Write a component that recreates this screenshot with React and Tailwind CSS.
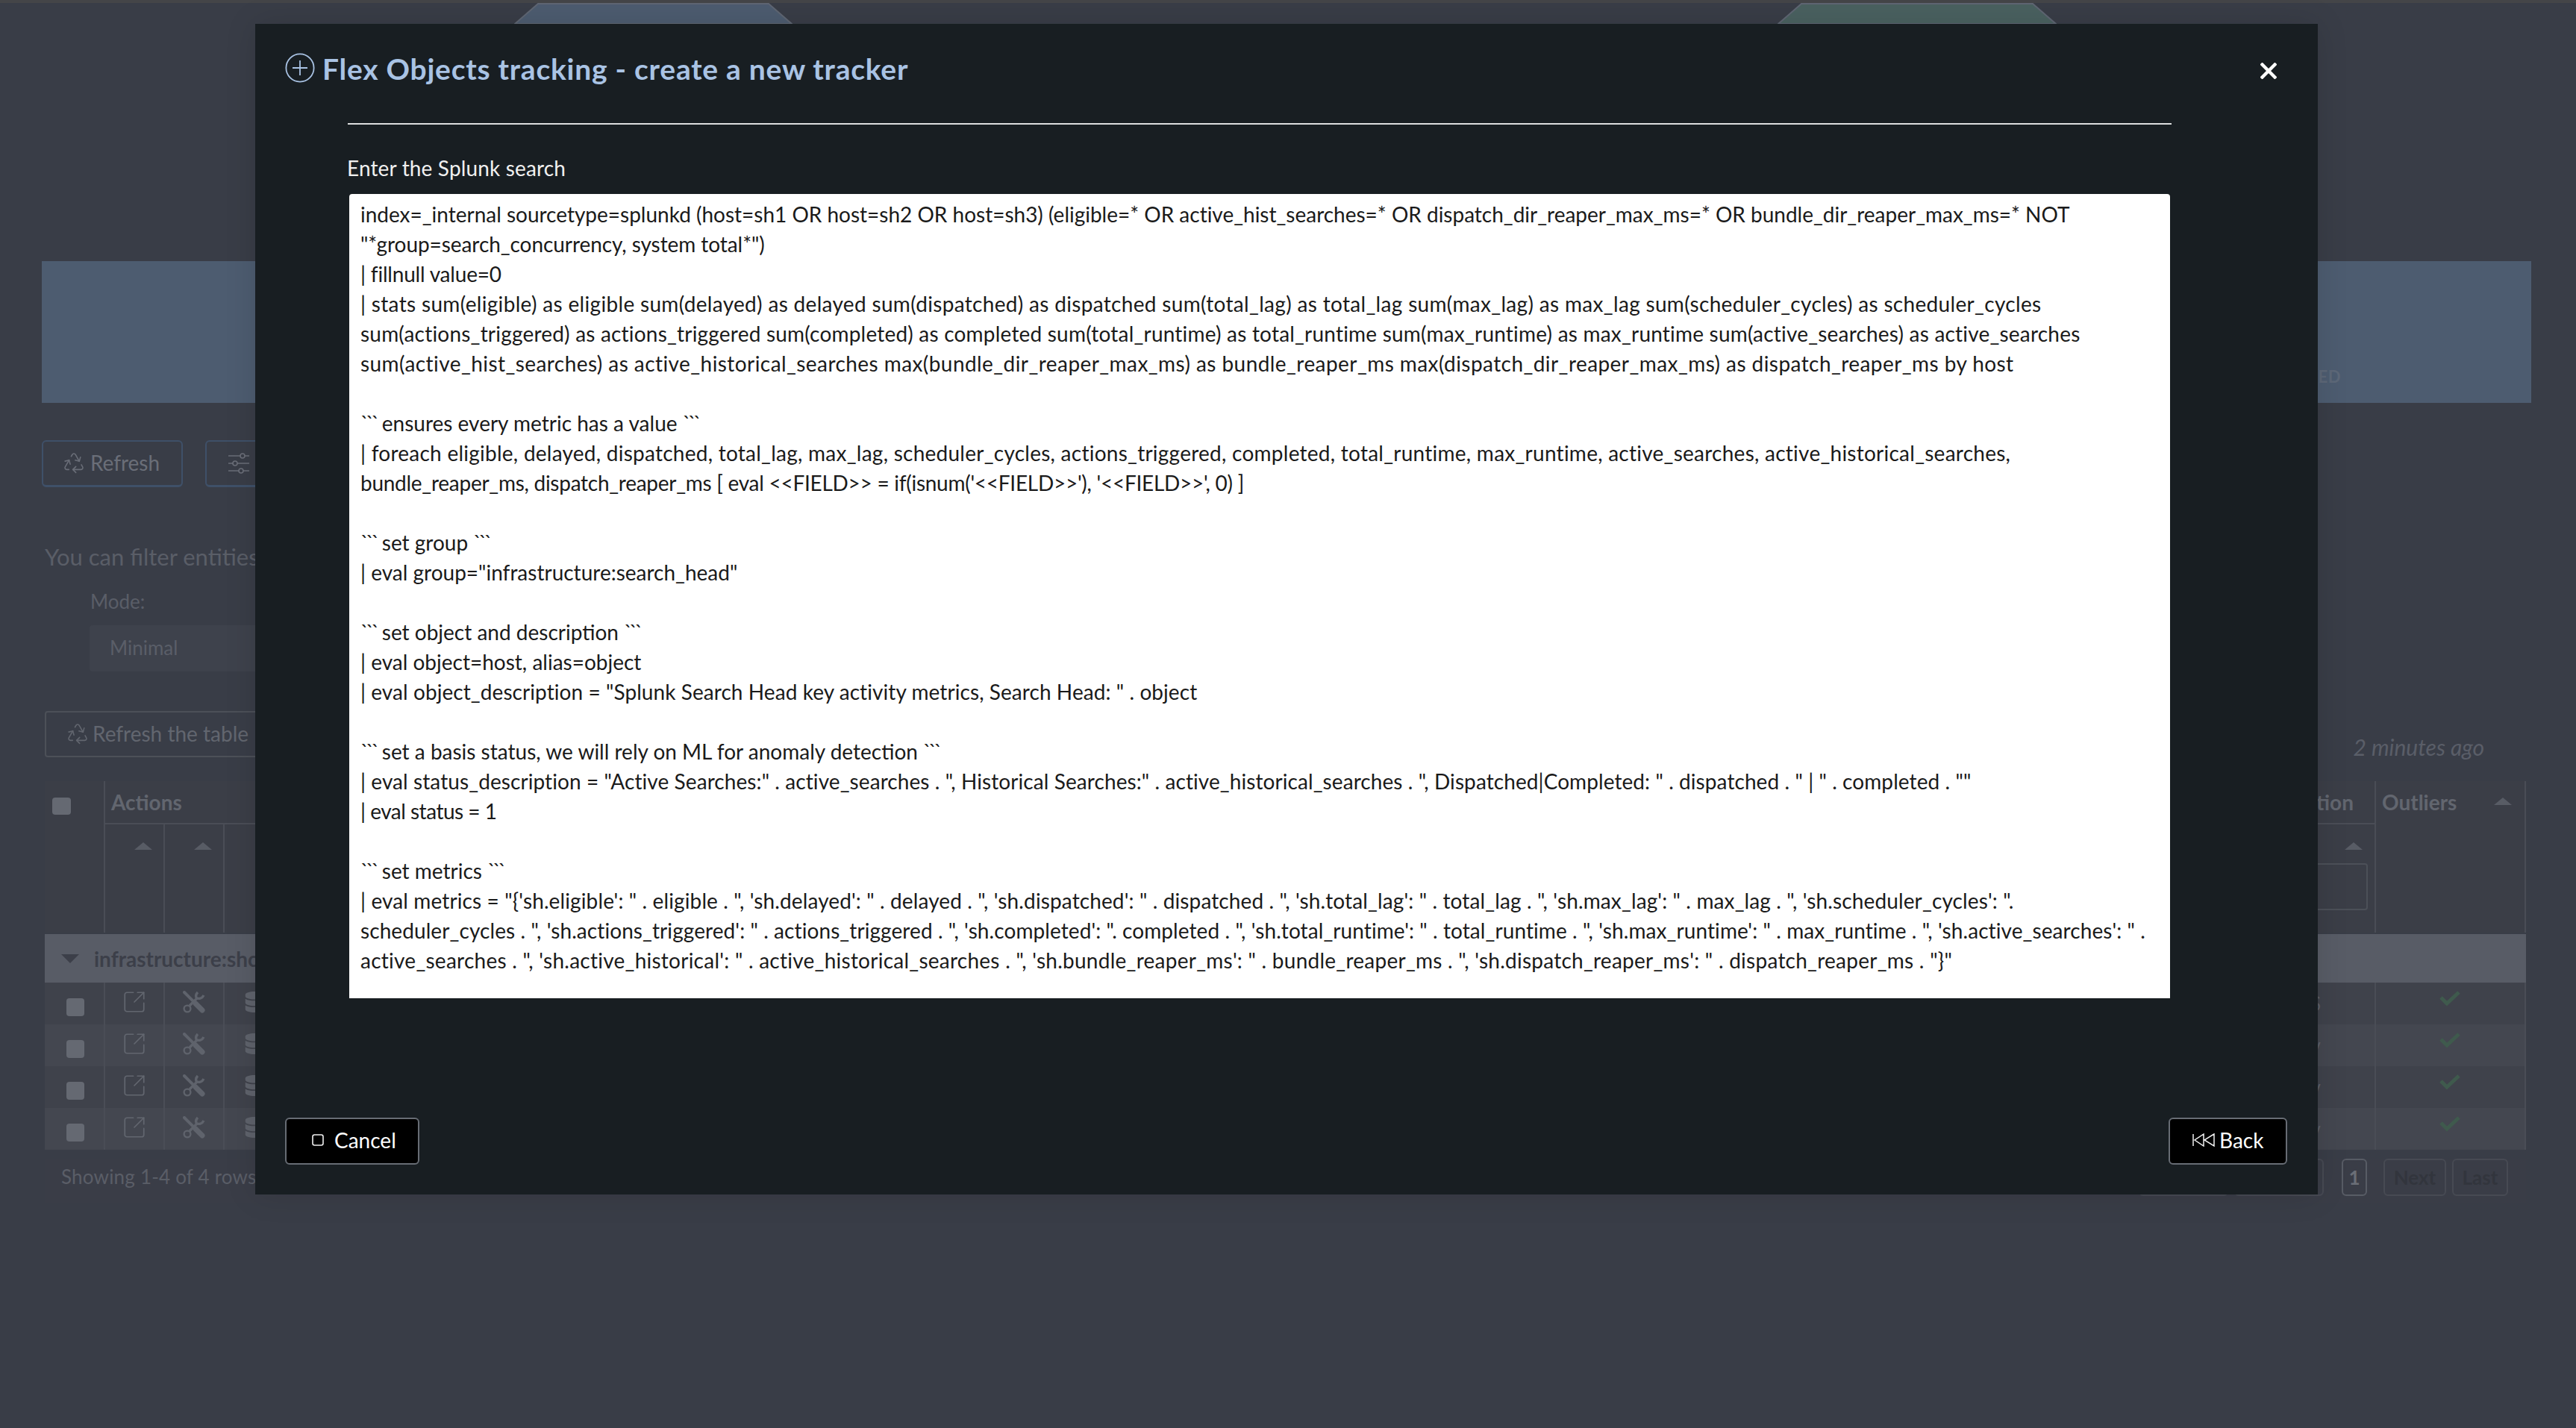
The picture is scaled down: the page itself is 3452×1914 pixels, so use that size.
import React from 'react';
import { Recycle, SquareArrowOutUpRight } from 'lucide-react';
import { FaDatabase } from 'react-icons/fa';

// each line carries its own tracking, the original font has other widths
const SEARCH_LINES = [
  { text: `index=_internal sourcetype=splunkd (host=sh1 OR host=sh2 OR host=sh3) (eligible=* OR active_hist_searches=* OR dispatch_dir_reaper_max_ms=* OR bundle_dir_reaper_max_ms=* NOT`, cls: 'tracking-[-0.01px]' },
  { text: `"*group=search_concurrency, system total*")`, cls: 'tracking-[-0.07px]' },
  { text: `| fillnull value=0`, cls: 'tracking-[-0.2px]' },
  { text: `| stats sum(eligible) as eligible sum(delayed) as delayed sum(dispatched) as dispatched sum(total_lag) as total_lag sum(max_lag) as max_lag sum(scheduler_cycles) as scheduler_cycles`, cls: 'tracking-[0.32px]' },
  { text: `sum(actions_triggered) as actions_triggered sum(completed) as completed sum(total_runtime) as total_runtime sum(max_runtime) as max_runtime sum(active_searches) as active_searches`, cls: 'tracking-[0.2px]' },
  { text: `sum(active_hist_searches) as active_historical_searches max(bundle_dir_reaper_max_ms) as bundle_reaper_ms max(dispatch_dir_reaper_max_ms) as dispatch_reaper_ms by host`, cls: 'tracking-[0.43px]' },
  { text: `` },
  { text: `\`\`\` ensures every metric has a value \`\`\`` },
  { text: `| foreach eligible, delayed, dispatched, total_lag, max_lag, scheduler_cycles, actions_triggered, completed, total_runtime, max_runtime, active_searches, active_historical_searches,`, cls: 'tracking-[0.25px]' },
  { text: `bundle_reaper_ms, dispatch_reaper_ms [ eval <<FIELD>> = if(isnum('<<FIELD>>'), '<<FIELD>>', 0) ]`, cls: 'tracking-[-0.27px]' },
  { text: `` },
  { text: `\`\`\` set group \`\`\`` },
  { text: `| eval group="infrastructure:search_head"` },
  { text: `` },
  { text: `\`\`\` set object and description \`\`\`` },
  { text: `| eval object=host, alias=object` },
  { text: `| eval object_description = "Splunk Search Head key activity metrics, Search Head: " . object`, cls: 'tracking-[0.07px]' },
  { text: `` },
  { text: `\`\`\` set a basis status, we will rely on ML for anomaly detection \`\`\`` },
  { text: `| eval status_description = "Active Searches:" . active_searches . ", Historical Searches:" . active_historical_searches . ", Dispatched|Completed: " . dispatched . " | " . completed . ""`, cls: 'tracking-[0.08px]' },
  { text: `| eval status = 1`, cls: 'tracking-[-0.5px]' },
  { text: `` },
  { text: `\`\`\` set metrics \`\`\`` },
  { text: `| eval metrics = "{'sh.eligible': " . eligible . ", 'sh.delayed': " . delayed . ", 'sh.dispatched': " . dispatched . ", 'sh.total_lag': " . total_lag . ", 'sh.max_lag': " . max_lag . ", 'sh.scheduler_cycles': ".`, cls: 'tracking-[0.12px]' },
  { text: `scheduler_cycles . ", 'sh.actions_triggered': " . actions_triggered . ", 'sh.completed': ". completed . ", 'sh.total_runtime': " . total_runtime . ", 'sh.max_runtime': " . max_runtime . ", 'sh.active_searches': " .`, cls: 'tracking-[0.08px]' },
  { text: `active_searches . ", 'sh.active_historical': " . active_historical_searches . ", 'sh.bundle_reaper_ms': " . bundle_reaper_ms . ", 'sh.dispatch_reaper_ms': " . dispatch_reaper_ms . "}"`, cls: 'tracking-[0.25px]' },
];

const ROWS = [
  { tail: 'S', bg: 'bg-[#3f424b]' },
  { tail: 'v', bg: 'bg-[#444750]' },
  { tail: 'v', bg: 'bg-[#3f424b]' },
  { tail: 'v', bg: 'bg-[#444750]' },
];

// wrench crossed with a screwdriver
const ToolsIcon = () => (
  <svg width="30" height="30" viewBox="0 0 30 30" fill="none" stroke="#5f636c" strokeWidth="2.4">
    <path d="M2 2 L17 17" strokeWidth="4" strokeLinecap="round" />
    <path d="M17 17 L26 26" strokeWidth="7" strokeLinecap="round" />
    <path d="M20 2 C17 5 17 9 19 10 L9 20" strokeWidth="3.4" />
    <path d="M28 6 C26 10 22 11 19 10" strokeWidth="3.4" />
    <circle cx="6" cy="24" r="4.4" />
  </svg>
);

const SlidersIcon = () => (
  <svg width="30" height="28" viewBox="0 0 30 28" fill="none" stroke="currentColor" strokeWidth="1.6">
    <path d="M1 4 H17 M23 4 H29 M1 14 H7 M13 14 H29 M1 24 H15 M21 24 H29" />
    <circle cx="20" cy="4" r="3" />
    <circle cx="10" cy="14" r="3" />
    <circle cx="18" cy="24" r="3" />
  </svg>
);

const UpArrow = ({ className = '' }) => (
  <div className={`w-0 h-0 border-x-[12px] border-x-transparent border-b-[10px] border-b-[#585c65] ${className}`} />
);

const Check = () => (
  <svg width="28" height="22" viewBox="0 0 28 22" fill="none" stroke="#3f5a4d" strokeWidth="5">
    <path d="M2 10 L10 18 L26 3" />
  </svg>
);

// the triple backticks are much narrower in the original font
const SearchLine = ({ text, cls = '' }) => (
  <div className={`h-10 whitespace-pre ${cls}`}>
    {text.split(/(```)/).map((part, i) =>
      part === '```' ? <span key={i} className="tracking-[-4px]">{part}</span> : part
    )}
  </div>
);

const Background = () => (
  <div className="w-[3452px] h-[1914px] bg-[#393d47] font-['Lato',sans-serif] text-[#5a5e68]">
    <div className="h-1 bg-[#444548]" />

    {/* top tiles */}
    <div className="h-[346px] flex items-start pl-[689px] gap-[1320px]">
      <svg width="373" height="28" viewBox="0 0 373 28">
        <polygon points="1,28 32,1 341,1 372,28" fill="#4d5c70" stroke="#5f6673" strokeWidth="2" />
      </svg>
      <svg width="374" height="28" viewBox="0 0 374 28">
        <polygon points="1,28 32,1 342,1 373,28" fill="#4a6160" stroke="#5f6673" strokeWidth="2" />
      </svg>
    </div>

    <div className="ml-[56px] w-[3336px] h-[190px] bg-[#4d5c70] flex items-end justify-end pr-[255px] pb-[22px]">
      <span className="text-[22px] leading-[26px] font-bold text-[#5d6878] tracking-wide">ED</span>
    </div>

    <div className="ml-[56px] mt-[50px] flex gap-[30px]">
      <div className="w-[189px] h-[63px] rounded-md border-2 border-[#3f5068] border-b-[3px] flex items-center justify-center gap-[6px] pr-1 pb-[3px] text-[28px] text-[#6a6e78]">
        <Recycle className="w-8 h-8" strokeWidth={1.2} />
        Refresh
      </div>
      <div className="w-[200px] h-[63px] rounded-md border-2 border-[#3f5068] border-b-[3px] flex items-center pl-7 text-[#6a6e78]">
        <SlidersIcon />
      </div>
    </div>

    <div className="ml-[60px] mt-[73px] h-10 leading-10 text-[31px] text-[#5a5e67]">You can filter entities</div>
    <div className="ml-[121px] mt-[20px] h-10 leading-10 text-[26px]">Mode:</div>
    <div className="ml-[120px] mt-[12px] w-[400px] h-[62px] rounded bg-[#3e424c] pl-[27px] leading-[60px] text-[26px]">Minimal</div>

    <div className="ml-[60px] mt-[53px] w-[3332px] h-[62px] flex justify-between">
      <div className="w-[340px] h-[62px] rounded border-2 border-[#4c5058] flex items-center pl-[26px] gap-[4px] pb-[3px] text-[28px] text-[#62666f]">
        <Recycle className="w-8 h-8" strokeWidth={1.2} />
        Refresh the table
      </div>
      <span className="pr-[63px] pt-[18px] text-[30px] leading-[60px] italic h-[62px]">2 minutes ago</span>
    </div>

    {/* table */}
    <div className="ml-[60px] mt-8 w-[3325px]">
      <div className="h-[203px] flex bg-[#3b3e47] border-r-2 border-[#4a4d56]">
        <div className="w-[81px] border-r-2 border-[#4a4d56] pl-[10px] pt-[22px]">
          <div className="w-[25px] h-[23px] rounded bg-[#656972]" />
        </div>
        <div className="flex-1 flex flex-col">
          <div className="h-[58px] border-b-2 border-[#4a4d56] flex items-center justify-between pl-2 pr-[28px] text-[28px] font-bold text-[#62666f]">
            <span>Actions</span>
            <span>Resolution</span>
          </div>
          <div className="flex-1 flex">
            <div className="w-[80px] border-r-2 border-[#4a4d56] pl-[39px] pt-6"><UpArrow /></div>
            <div className="w-[80px] border-r-2 border-[#4a4d56] pl-[39px] pt-6"><UpArrow /></div>
            <div className="flex-1 flex flex-col items-end pr-[9px] pt-6">
              <UpArrow className="mr-[7px]" />
              <div className="w-[300px] h-[63px] mt-[18px] rounded border-2 border-[#4c5058]" />
            </div>
          </div>
        </div>
        <div className="w-[201px] border-l-2 border-[#4a4d56] flex justify-between pl-[8px] pr-[17px] pt-[7px] text-[28px] font-bold text-[#62666f]">
          <span>Outliers</span>
          <UpArrow className="mt-[15px]" />
        </div>
      </div>

      <div className="h-[65px] mt-[2px] bg-[#585c66] flex items-center pl-[22px] gap-[20px] text-[28px] font-bold text-[#3c3f49]">
        <div className="w-0 h-0 border-x-[12px] border-x-transparent border-t-[12px] border-t-[#3c3f49]" />
        infrastructure:shc
      </div>

      {ROWS.map((row, i) => (
        <div key={i} className={`h-[56px] flex items-center border-r-2 border-[#4a4d56] ${row.bg}`}>
          <div className="w-[81px] h-full border-r-2 border-[#4a4d56] pl-[29px] pt-[21px]">
            <div className="w-[24px] h-[24px] rounded bg-[#656972]" />
          </div>
          <div className="w-[80px] h-full border-r-2 border-[#4a4d56] flex items-center justify-center pb-1 text-[#62666f]">
            <SquareArrowOutUpRight className="w-[34px] h-[34px]" strokeWidth={1.2} />
          </div>
          <div className="w-[80px] h-full border-r-2 border-[#4a4d56] flex items-center justify-center pb-1">
            <ToolsIcon />
          </div>
          <div className="w-[80px] h-full flex items-center justify-center pb-1 text-[#5f636c]">
            <FaDatabase className="w-[26px] h-[28px]" />
          </div>
          <div className="flex-1 h-full border-r-2 border-[#4a4d56] flex items-center justify-end pr-[72px] text-[26px] text-[#5b5f68]">
            {row.tail}
          </div>
          <div className="w-[199px] h-full flex justify-center pr-[2px] pt-[10px]">
            <Check />
          </div>
        </div>
      ))}

      <div className="mt-[12px] h-[60px] flex items-start justify-between bg-[#3a3d47]">
        <span className="pl-[22px] text-[26px] tracking-[0.2px] leading-[48px] text-[#5a5e67]">Showing 1-4 of 4 rows</span>
        <div className="flex pr-[24px] text-[26px] font-bold text-[#32353d] leading-[46px] text-center">
          <div className="w-[120px] h-[50px] rounded-md border-2 border-[#474a53]">First</div>
          <div className="w-[120px] h-[50px] ml-2 rounded-md border-2 border-[#474a53]">Prev</div>
          <div className="w-[34px] h-[50px] ml-[24px] rounded-md border-2 border-[#585c65] text-[#6a6e76]">1</div>
          <div className="w-[84px] h-[50px] ml-[22px] rounded-md border-2 border-[#474a53]">Next</div>
          <div className="w-[75px] h-[50px] ml-2 rounded-md border-2 border-[#474a53]">Last</div>
        </div>
      </div>
    </div>
  </div>
);

const Modal = () => (
  <div className="absolute left-[342px] top-8 w-[2764px] h-[1569px] bg-[#181e22] shadow-[0_0_40px_rgba(0,0,0,0.12)] flex flex-col font-['Lato',sans-serif]">
    <div className="h-[124px] flex items-center pl-[40px] pr-[55px] pb-[4px]">
      <svg width="40" height="40" viewBox="0 0 40 40" fill="none" stroke="#a9c3e4" strokeWidth="1.8" className="mt-[-2px]">
        <circle cx="20" cy="20" r="18.6" />
        <path d="M20 10 V30 M10 20 H30" />
      </svg>
      <span className="ml-[10px] text-[39px] font-bold tracking-[0.75px] text-[#a9c3e4] leading-none">Flex Objects tracking - create a new tracker</span>
      <svg width="22" height="22" viewBox="0 0 22 22" fill="none" stroke="#ffffff" strokeWidth="4.4" className="ml-auto mt-[6px]">
        <path d="M1 1 L21 21 M21 1 L1 21" />
      </svg>
    </div>

    <div className="ml-[124px] w-[2444px] h-[2px] bg-[#dcdedf] mt-[9px]" />

    <div className="ml-[123px] mt-[38px] h-10 leading-10 text-[28px] tracking-[0.15px] text-[#f0f0f0]">Enter the Splunk search</div>

    <div className="ml-[126px] mt-[15px] w-[2440px] h-[1078px] bg-white rounded-t pt-[7px] pl-[15px] text-[28px] leading-10 text-[#1a1a1a] overflow-hidden">
      {SEARCH_LINES.map((line, i) => (
        <SearchLine key={i} text={line.text} cls={line.cls} />
      ))}
    </div>

    <div className="mt-[160px] mx-[40px] flex justify-between text-[28px] text-white">
      <div className="w-[180px] h-[63px] bg-black border-2 border-[#676c74] rounded-md flex items-center pl-[34px] pb-[3px] gap-[14px]">
        <svg width="16" height="16" viewBox="0 0 16 16" fill="none" stroke="#f0f0f0" strokeWidth="1.6">
          <rect x="1" y="1" width="14" height="14" rx="2.5" />
        </svg>
        Cancel
      </div>
      <div className="w-[159px] h-[63px] bg-black border-2 border-[#676c74] rounded-md flex items-center pl-[30px] pb-[3px] gap-[6px] mr-[1px]">
        <svg width="30" height="18" viewBox="0 0 30 18" fill="none" stroke="#f0f0f0" strokeWidth="1.5">
          <path d="M1 1 V17 M15 1 L3 9 L15 17 Z M29 1 L16 9 L29 17 Z" />
        </svg>
        Back
      </div>
    </div>
  </div>
);

const App = () => (
  <div className="relative w-[3452px] h-[1914px] overflow-hidden">
    <Background />
    <Modal />
  </div>
);

export default App;
